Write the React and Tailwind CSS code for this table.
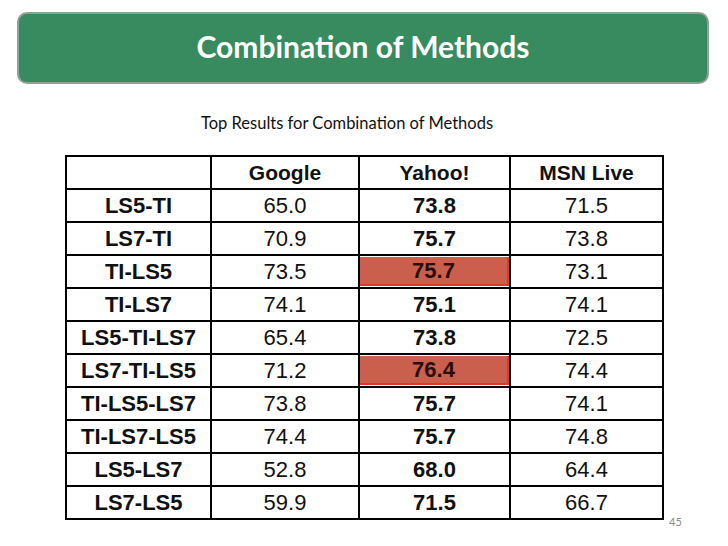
import React from 'react';

const rows = [
  { name: 'LS5-TI', g: '65.0', y: '73.8', m: '71.5' },
  { name: 'LS7-TI', g: '70.9', y: '75.7', m: '73.8' },
  { name: 'TI-LS5', g: '73.5', y: '75.7', m: '73.1', hi: true },
  { name: 'TI-LS7', g: '74.1', y: '75.1', m: '74.1' },
  { name: 'LS5-TI-LS7', g: '65.4', y: '73.8', m: '72.5' },
  { name: 'LS7-TI-LS5', g: '71.2', y: '76.4', m: '74.4', hi: true },
  { name: 'TI-LS5-LS7', g: '73.8', y: '75.7', m: '74.1' },
  { name: 'TI-LS7-LS5', g: '74.4', y: '75.7', m: '74.8' },
  { name: 'LS5-LS7', g: '52.8', y: '68.0', m: '64.4' },
  { name: 'LS7-LS5', g: '59.9', y: '71.5', m: '66.7' },
];

export default function App() {
  return (
    <div className="w-[728px] h-[546px] bg-white overflow-hidden flex flex-col">
      {/* slide title */}
      <div className="ml-[17px] mt-[12px] w-[692px] h-[72px] rounded-[10px] border-2 border-[#8fa293] bg-[#388a5f] flex items-center justify-center">
        <h1 className="text-white font-bold text-[30px] leading-none pb-[4px]" style={{ fontFamily: 'Lato, "Open Sans", sans-serif' }}>
          Combination of Methods
        </h1>
      </div>

      <p className="mt-[29px] ml-[201px] text-[16.5px] leading-[20px] text-[#111]" style={{ fontFamily: 'Lato, "Open Sans", sans-serif' }}>
        Top Results for Combination of Methods
      </p>

      <div className="flex items-end mt-[22px]">
        <table
          className="ml-[65px] border-collapse border-2 border-black text-[22px] leading-none text-[#111] table-fixed"
          style={{ fontFamily: '"Liberation Sans", Arial, sans-serif' }}
        >
          <colgroup>
            <col className="w-[145px]" />
            <col className="w-[148px]" />
            <col className="w-[151px]" />
            <col className="w-[153px]" />
          </colgroup>
          <thead>
            <tr className="h-[33px] text-[21px]">
              <th className="border-2 border-black"></th>
              <th className="border-2 border-black font-bold">Google</th>
              <th className="border-2 border-black font-bold">Yahoo!</th>
              <th className="border-2 border-black font-bold">MSN Live</th>
            </tr>
          </thead>
          <tbody>
            {rows.map((r) => (
              <tr key={r.name} className="h-[33px]">
                <td className="border-2 border-black text-center font-bold">{r.name}</td>
                <td className="border-2 border-black text-center">{r.g}</td>
                <td className={r.hi ? 'border-2 border-black p-0' : 'border-2 border-black text-center font-bold'}>
                  {r.hi ? (
                    <div className="h-[29px] bg-[#c95f4c] border-r-2 border-b-2 border-[#e2362a] flex items-center justify-center font-bold text-[#2a0d0b]">
                      {r.y}
                    </div>
                  ) : (
                    r.y
                  )}
                </td>
                <td className="border-2 border-black text-center">{r.m}</td>
              </tr>
            ))}
          </tbody>
        </table>
        <span className="ml-[5px] mb-[-10px] text-[11px] text-[#8a8a8a]" style={{ fontFamily: 'Lato, "Open Sans", sans-serif' }}>
          45
        </span>
      </div>
    </div>
  );
}
